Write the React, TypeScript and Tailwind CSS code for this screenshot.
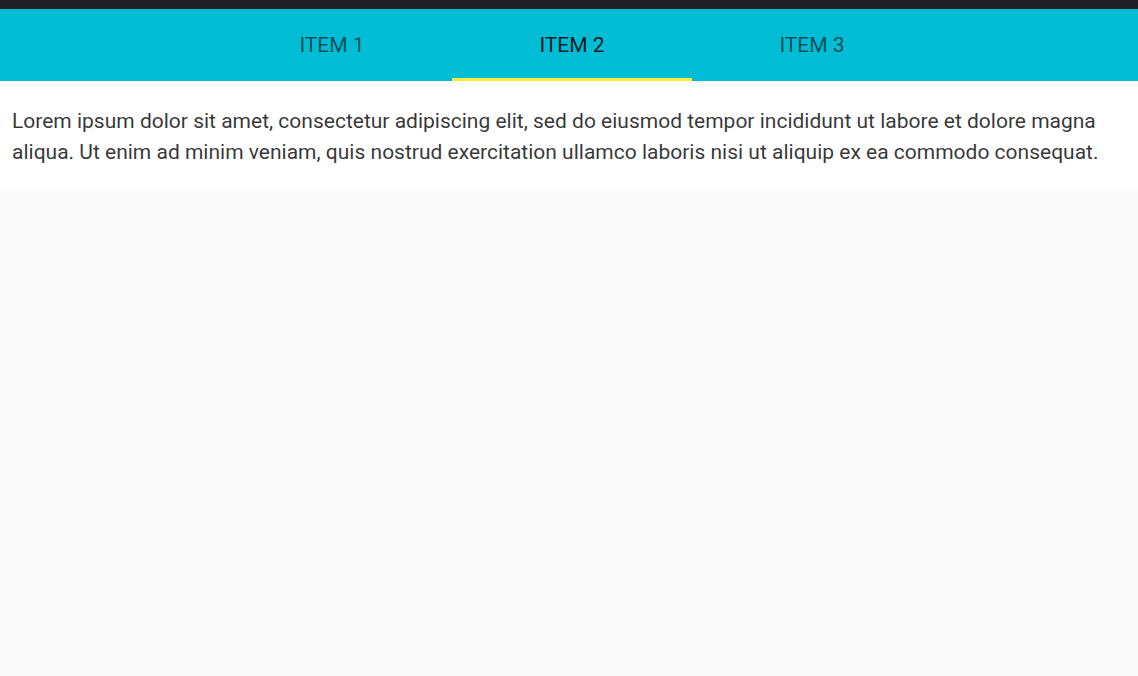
import React from "react";

export default function App() {
  const tabs = ["ITEM 1", "ITEM 2", "ITEM 3"];
  const active = 1;
  return (
    <div
      className="w-[1138px] h-[676px] bg-[#fafafa] flex flex-col overflow-hidden"
      style={{ fontFamily: "Roboto, 'Liberation Sans', sans-serif" }}
    >
      <div className="h-[9px] bg-[#201f26] shrink-0" />
      <div className="h-[72px] bg-[#00bcd4] flex pl-[212px] shrink-0">
        {tabs.map((t, i) => (
          <div
            key={t}
            className={
              "w-[240px] h-full relative flex items-center justify-center pt-[1px] text-[21px] " +
              (i === active ? "text-[rgba(0,0,0,0.87)]" : "text-[rgba(0,0,0,0.6)]")
            }
          >
            <span>{t}</span>
            {i === active && (
              <div className="absolute left-0 right-0 bottom-0 h-[3px] bg-[#ffeb3b]" />
            )}
          </div>
        ))}
      </div>
      <div className="bg-white px-[12px] pt-[25px] pb-[23px] text-[21px] leading-[1.46429] text-[rgba(0,0,0,0.8)]">
        Lorem ipsum dolor sit amet, consectetur adipiscing elit, sed do eiusmod tempor incididunt ut
        labore et dolore magna aliqua. Ut enim ad minim veniam, quis nostrud exercitation ullamco
        laboris nisi ut aliquip ex ea commodo consequat.
      </div>
    </div>
  );
}
